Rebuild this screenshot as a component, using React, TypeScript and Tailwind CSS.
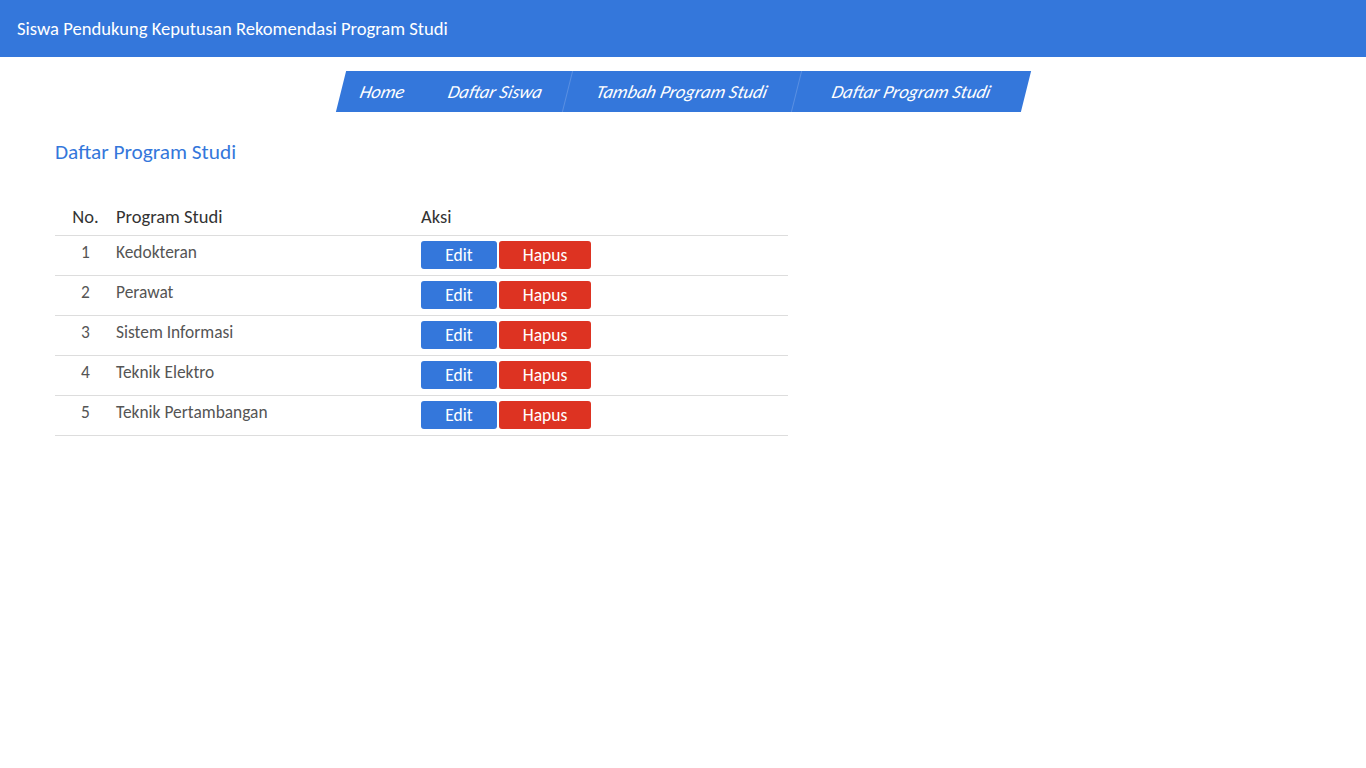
const programs = ['Kedokteran', 'Perawat', 'Sistem Informasi', 'Teknik Elektro', 'Teknik Pertambangan'];

const navItems = [
  { label: 'Home', w: 'w-[83px]', sep: false },
  { label: 'Daftar Siswa', w: 'w-[143px]', sep: false },
  { label: 'Tambah Program Studi', w: 'w-[229px]', sep: true },
  { label: 'Daftar Program Studi', w: 'w-[230px]', sep: true },
];

export default function App() {
  return (
    <div className="min-h-screen bg-white font-['Carlito','Lato',sans-serif]">
      {/* Top bar */}
      <header className="h-[57px] bg-[#3477db] flex items-center px-[17px]">
        <h1 className="text-white text-[18.6px]">Siswa Pendukung Keputusan Rekomendasi Program Studi</h1>
      </header>

      {/* Nav */}
      <nav className="flex justify-center mt-[14px]">
        <ul className="flex h-[41px] bg-[#3477db] -skew-x-[14deg]">
          {navItems.map((item) => (
            <li
              key={item.label}
              className={`${item.w} flex items-center justify-center text-white text-[18.4px] ${item.sep ? 'border-l border-[#5a90e2]' : ''}`}
            >
              <a href="#" className="italic">{item.label}</a>
            </li>
          ))}
        </ul>
      </nav>

      {/* Content */}
      <main className="px-[55px] pt-[27px]">
        <h2 className="text-[#3477db] text-[21.3px] leading-[26px]">Daftar Program Studi</h2>

        <table className="mt-[34px] w-[733px] border-collapse">
          <thead>
            <tr className="border-b border-[#dddddd] text-[#333333] text-[18.5px]">
              <th className="w-[61px] h-[36px] font-normal text-center">No.</th>
              <th className="w-[305px] font-normal text-left">Program Studi</th>
              <th className="font-normal text-left">Aksi</th>
            </tr>
          </thead>
          <tbody>
            {programs.map((p, i) => (
              <tr key={p} className="border-b border-[#dddddd] text-[#555555] text-[17.4px]">
                <td className="h-[40px] text-center align-top pt-[3px]">{i + 1}</td>
                <td className="align-top pt-[3px]">{p}</td>
                <td className="align-middle">
                  <div className="flex gap-[2px]">
                    <button className="w-[76px] h-[28px] rounded-[3px] bg-[#3477db] text-white text-[17.5px]">Edit</button>
                    <button className="w-[92px] h-[28px] rounded-[3px] bg-[#dd3322] text-white text-[17.5px]">Hapus</button>
                  </div>
                </td>
              </tr>
            ))}
          </tbody>
        </table>
      </main>
    </div>
  );
}
